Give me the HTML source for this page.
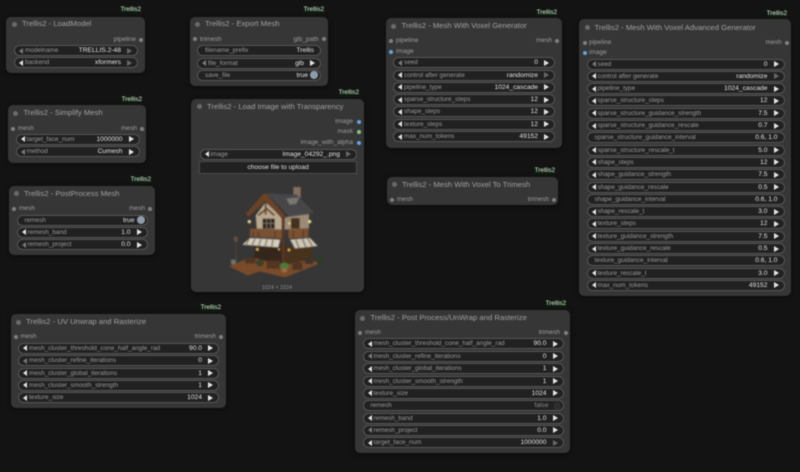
<!DOCTYPE html>
<html><head><meta charset="utf-8"><style>
html,body{margin:0;padding:0;width:800px;height:472px;overflow:hidden;background:#131313}
body{position:relative;font-family:"Liberation Sans",sans-serif}
#r{position:absolute;left:0;top:0;width:800px;height:472px;background:#131313;filter:blur(.4px);overflow:hidden}
.n{position:absolute;background:#363636;border-radius:5px;box-shadow:0 1px 5px rgba(0,0,0,.55)}
.t{position:absolute;font-size:7.7px;line-height:12px;height:12px;color:#a0a0a0;white-space:nowrap}
.d{position:absolute;width:5px;height:5px;border-radius:50%;background:#6a6a6a}
.b{position:absolute;font-size:6.4px;line-height:8px;height:8px;padding:0 1px;color:#dcf0dc;background:#0f1a10;white-space:nowrap;transform:translateX(-100%);border-radius:2px}
.p{position:absolute;font-size:6.5px;line-height:10px;height:10px;color:#9c9c9c;white-space:nowrap}
.pr{transform:translateX(-100%)}
.o{position:absolute;width:4px;height:4px;border-radius:50%;background:#808080}
.w{position:absolute;height:9px;background:#212121;border:1px solid #565656;border-radius:6px;font-size:6.4px;line-height:9.5px;color:#989898;white-space:nowrap}
.w b{font-weight:normal;position:absolute;left:10px;top:0}
.w b.s{left:7px}
.w u{text-decoration:none;position:absolute;right:16px;top:0;color:#e4e4e4;font-size:6.7px}
.w u.s{right:6px}
.w u.c{right:12px}
.w u.f{right:14px;color:#8a8a8a}
.w i{position:absolute;top:1.5px;width:0;height:0;border-top:3px solid transparent;border-bottom:3px solid transparent}
.w i.a{left:4px;border-right:4px solid #e4e4e4}
.w i.z{right:5px;border-left:5px solid #e4e4e4}
.w i.a.m{border-right-color:#7a7a7a}
.w i.z.m{border-left-color:#686868}
.w em{position:absolute;right:2px;top:.5px;width:8px;height:8px;border-radius:50%;background:#8f9caf}
.w em.x{background:#2e2e2e}
.c2{position:absolute;background:#212121;border:1px solid #4c4c4c;font-size:6.7px;line-height:11px;height:11px;color:#e0e0e0;text-align:center}
.v{position:absolute;font-size:5.4px;line-height:8px;color:#8a8a8a;text-align:center}
</style></head><body><div id="r">

<!-- LoadModel -->
<div class="b" style="left:142px;top:6px">Trellis2</div>
<div class="n" style="left:6px;top:17px;width:139px;height:56px"></div>
<div class="d" style="left:12px;top:21.5px"></div><div class="t" style="left:22px;top:18px">Trellis2 - LoadModel</div>
<div class="p pr" style="left:136px;top:34.5px">pipeline</div><div class="o" style="left:138.5px;top:37.5px"></div>
<div class="w" style="left:14px;top:45px;width:122px"><i class="a m"></i><b>modelname</b><u>TRELLIS.2-48</u><i class="z m"></i></div>
<div class="w" style="left:14px;top:57px;width:122px"><i class="a"></i><b>backend</b><u>xformers</u><i class="z m"></i></div>

<!-- Simplify -->
<div class="b" style="left:143px;top:95.5px">Trellis2</div>
<div class="n" style="left:8px;top:105px;width:138px;height:58px"></div>
<div class="d" style="left:13px;top:110.5px"></div><div class="t" style="left:23.5px;top:107px">Trellis2 - Simplify Mesh</div>
<div class="o" style="left:11px;top:126.5px"></div><div class="p" style="left:18px;top:123.5px">mesh</div>
<div class="p pr" style="left:137px;top:123.5px">mesh</div><div class="o" style="left:140px;top:126.5px"></div>
<div class="w" style="left:15.5px;top:133.5px;width:122px"><i class="a"></i><b>target_face_num</b><u>1000000</u><i class="z"></i></div>
<div class="w" style="left:15.5px;top:146px;width:122px"><i class="a m"></i><b>method</b><u>Cumesh</u><i class="z"></i></div>

<!-- PostProcess -->
<div class="b" style="left:152px;top:175.5px">Trellis2</div>
<div class="n" style="left:9px;top:186px;width:146px;height:69px"></div>
<div class="d" style="left:14px;top:191px"></div><div class="t" style="left:24px;top:187.5px">Trellis2 - PostProcess Mesh</div>
<div class="o" style="left:12px;top:206.5px"></div><div class="p" style="left:19px;top:203.5px">mesh</div>
<div class="p pr" style="left:145px;top:203.5px">mesh</div><div class="o" style="left:148px;top:206.5px"></div>
<div class="w" style="left:16.5px;top:214.5px;width:129px"><b class="s">remesh</b><u class="c">true</u><em></em></div>
<div class="w" style="left:16.5px;top:226.5px;width:129px"><i class="a"></i><b>remesh_band</b><u>1.0</u><i class="z"></i></div>
<div class="w" style="left:16.5px;top:239px;width:129px"><i class="a m"></i><b>remesh_project</b><u>0.0</u><i class="z"></i></div>

<!-- Export -->
<div class="b" style="left:325px;top:6px">Trellis2</div>
<div class="n" style="left:189.5px;top:17px;width:138.5px;height:69px"></div>
<div class="d" style="left:195px;top:22px"></div><div class="t" style="left:205px;top:18px">Trellis2 - Export Mesh</div>
<div class="o" style="left:193px;top:37px"></div><div class="p" style="left:200px;top:34.5px">trimesh</div>
<div class="p pr" style="left:318.5px;top:34.5px">glb_path</div><div class="o" style="left:321.5px;top:37px"></div>
<div class="w" style="left:197px;top:45px;width:122px"><b class="s">filename_prefix</b><u class="s">Trellis</u></div>
<div class="w" style="left:197px;top:57.5px;width:122px"><i class="a m"></i><b>file_format</b><u>glb</u><i class="z"></i></div>
<div class="w" style="left:197px;top:69.5px;width:122px"><b class="s">save_file</b><u class="c">true</u><em></em></div>

<!-- Load Image -->
<div class="b" style="left:360px;top:89px">Trellis2</div>
<div class="n" style="left:191px;top:99px;width:172.5px;height:193px"></div>
<div class="d" style="left:196.5px;top:104px"></div><div class="t" style="left:207px;top:100.5px">Trellis2 - Load Image with Transparency</div>
<div class="p pr" style="left:353px;top:117px">image</div><div class="o" style="left:356.5px;top:120px;background:#64a4dc"></div>
<div class="p pr" style="left:353px;top:127px">mask</div><div class="o" style="left:356.5px;top:130px;background:#82c784"></div>
<div class="p pr" style="left:353px;top:137.5px">image_with_alpha</div><div class="o" style="left:356.5px;top:140.5px;background:#64a4dc"></div>
<div class="w" style="left:199.5px;top:148.5px;width:155.5px"><i class="a"></i><b>image</b><u>Image_04292_.png</u><i class="z m"></i></div>
<div class="c2" style="left:199px;top:160.5px;width:156px">choose file to upload</div>
<svg style="position:absolute;left:225px;top:178px" width="105" height="105" viewBox="0 0 315 315">
<defs><filter id="bl" x="-5%" y="-5%" width="110%" height="110%"><feGaussianBlur stdDeviation="1.2"/></filter></defs>
<g filter="url(#bl)">
<polygon points="12,265 70,240 295,252 180,298 105,280 68,292" fill="#7a4b2a"/>
<rect x="205" y="27" width="22" height="32" fill="#86705c"/>
<polygon points="126,46 215,50 268,104 192,116 140,60" fill="#46474a"/>
<polygon points="184,62 222,58 214,78 194,80" fill="#7a7672"/>
<polygon points="92,112 122,72 178,126 178,155 95,152" fill="#b8a88e"/>
<polygon points="178,118 195,116 252,108 252,152 178,155" fill="#9a8a76"/>
<polygon points="62,108 116,46 128,50 184,118 174,126 122,68 72,116" fill="#6b4225"/>
<path d="M122,70L122,110M100,112L125,92L148,112" stroke="#5a3a22" stroke-width="5" fill="none"/>
<rect x="113" y="122" width="36" height="30" fill="#2f241c"/>
<path d="M125,122V152M137,122V152M113,136H149" stroke="#8f8270" stroke-width="2"/>
<rect x="198" y="120" width="26" height="32" fill="#43311f"/>
<polygon points="75,152 178,155 178,182 75,176" fill="#7a5130"/>
<polygon points="190,154 250,150 250,178 190,182" fill="#7a5130"/>
<path d="M85,160V176M100,160V178M150,160V180M205,158V180M235,156V178" stroke="#4e3320" stroke-width="3"/>
<polygon points="88,205 172,208 172,262 88,240" fill="#35261a"/>
<polygon points="172,205 262,205 262,240 172,264" fill="#47331f"/>
<rect x="170" y="118" width="9" height="150" fill="#563620"/>
<polygon points="52,200 75,180 166,185 160,208" fill="#d6cebc"/>
<polygon points="195,185 255,180 278,204 210,211" fill="#cfc7b6"/>
<path d="M72,182L62,203M90,182L80,205M108,183L100,206M126,184L120,207M144,185L140,208M212,184L222,210M232,182L243,208M248,181L262,205" stroke="#7b7062" stroke-width="4" fill="none"/>
<rect x="31" y="190" width="4" height="64" fill="#4a4038"/>
<rect x="27" y="176" width="11" height="15" fill="#5e5146"/>
<rect x="18" y="245" width="14" height="14" fill="#6c7470"/>
<circle cx="73" cy="131" r="5" fill="#eedb90"/>
<circle cx="193" cy="136" r="4" fill="#dec880"/>
<circle cx="254" cy="131" r="5" fill="#eedb90"/>
<circle cx="97" cy="214" r="4" fill="#d8b860"/>
<circle cx="192" cy="216" r="4" fill="#d8b860"/>
<circle cx="162" cy="214" r="3" fill="#d8b860"/>
<rect x="60" y="240" width="32" height="16" fill="#4e3524"/>
<rect x="125" y="248" width="40" height="24" fill="#523522"/>
<ellipse cx="105" cy="255" rx="12" ry="10" fill="#3e4129"/>
<ellipse cx="178" cy="264" rx="14" ry="10" fill="#4d7a38"/>
<rect x="170" y="272" width="16" height="11" fill="#9a6a44"/>
<ellipse cx="285" cy="248" rx="11" ry="11" fill="#2d3a26"/>
<rect x="202" y="252" width="30" height="24" fill="#4f3423"/>
<rect x="240" y="238" width="24" height="20" fill="#3f3329"/>
</g></svg>
<div class="v" style="left:191px;top:284px;width:172px">1024 × 1024</div>

<!-- Voxel Generator -->
<div class="b" style="left:558px;top:8.5px">Trellis2</div>
<div class="n" style="left:386px;top:18px;width:175.5px;height:130px"></div>
<div class="d" style="left:391px;top:23.5px"></div><div class="t" style="left:401.5px;top:20px">Trellis2 - Mesh With Voxel Generator</div>
<div class="o" style="left:389px;top:39px"></div><div class="p" style="left:396px;top:36px">pipeline</div>
<div class="p pr" style="left:552px;top:36px">mesh</div><div class="o" style="left:555px;top:39px"></div>
<div class="o" style="left:389px;top:49.5px;background:#64a4dc"></div><div class="p" style="left:396px;top:46.5px">image</div>
<div class="w" style="left:393px;top:57px;width:160px"><i class="a m"></i><b>seed</b><u>0</u><i class="z"></i></div>
<div class="w" style="left:393px;top:69.5px;width:160px"><i class="a"></i><b>control after generate</b><u>randomize</u><i class="z m"></i></div>
<div class="w" style="left:393px;top:81.5px;width:160px"><i class="a"></i><b>pipeline_type</b><u>1024_cascade</u><i class="z"></i></div>
<div class="w" style="left:393px;top:94px;width:160px"><i class="a"></i><b>sparse_structure_steps</b><u>12</u><i class="z"></i></div>
<div class="w" style="left:393px;top:106px;width:160px"><i class="a"></i><b>shape_steps</b><u>12</u><i class="z"></i></div>
<div class="w" style="left:393px;top:118.5px;width:160px"><i class="a"></i><b>texture_steps</b><u>12</u><i class="z"></i></div>
<div class="w" style="left:393px;top:131px;width:160px"><i class="a"></i><b>max_num_tokens</b><u>49152</u><i class="z"></i></div>

<!-- To Trimesh -->
<div class="b" style="left:556px;top:166.5px">Trellis2</div>
<div class="n" style="left:387px;top:177px;width:171px;height:28px"></div>
<div class="d" style="left:392px;top:182px"></div><div class="t" style="left:402px;top:178.5px">Trellis2 - Mesh With Voxel To Trimesh</div>
<div class="o" style="left:390px;top:197.5px"></div><div class="p" style="left:397px;top:194.5px">mesh</div>
<div class="p pr" style="left:549px;top:194.5px">trimesh</div><div class="o" style="left:552px;top:197.5px"></div>

<!-- Advanced -->
<div class="b" style="left:788px;top:9.5px">Trellis2</div>
<div class="n" style="left:579px;top:19px;width:212px;height:277px"></div>
<div class="d" style="left:584.5px;top:25px"></div><div class="t" style="left:594.5px;top:21.5px">Trellis2 - Mesh With Voxel Advanced Generator</div>
<div class="o" style="left:582.5px;top:41px"></div><div class="p" style="left:589px;top:38px">pipeline</div>
<div class="p pr" style="left:781.5px;top:38px">mesh</div><div class="o" style="left:784.5px;top:41px"></div>
<div class="o" style="left:582.5px;top:51px;background:#64a4dc"></div><div class="p" style="left:589px;top:48px">image</div>
<div class="w" style="left:586.5px;top:58.5px;width:196px"><i class="a m"></i><b>seed</b><u>0</u><i class="z"></i></div>
<div class="w" style="left:586.5px;top:70.8px;width:196px"><i class="a"></i><b>control after generate</b><u>randomize</u><i class="z m"></i></div>
<div class="w" style="left:586.5px;top:83.1px;width:196px"><i class="a"></i><b>pipeline_type</b><u>1024_cascade</u><i class="z"></i></div>
<div class="w" style="left:586.5px;top:95.4px;width:196px"><i class="a"></i><b>sparse_structure_steps</b><u>12</u><i class="z"></i></div>
<div class="w" style="left:586.5px;top:107.7px;width:196px"><i class="a"></i><b>sparse_structure_guidance_strength</b><u>7.5</u><i class="z"></i></div>
<div class="w" style="left:586.5px;top:120px;width:196px"><i class="a"></i><b>sparse_structure_guidance_rescale</b><u>0.7</u><i class="z"></i></div>
<div class="w" style="left:586.5px;top:132.3px;width:196px"><b class="s">sparse_structure_guidance_interval</b><u class="s">0.6, 1.0</u></div>
<div class="w" style="left:586.5px;top:144.6px;width:196px"><i class="a"></i><b>sparse_structure_rescale_t</b><u>5.0</u><i class="z"></i></div>
<div class="w" style="left:586.5px;top:156.9px;width:196px"><i class="a"></i><b>shape_steps</b><u>12</u><i class="z"></i></div>
<div class="w" style="left:586.5px;top:169.2px;width:196px"><i class="a"></i><b>shape_guidance_strength</b><u>7.5</u><i class="z"></i></div>
<div class="w" style="left:586.5px;top:181.5px;width:196px"><i class="a"></i><b>shape_guidance_rescale</b><u>0.5</u><i class="z"></i></div>
<div class="w" style="left:586.5px;top:193.8px;width:196px"><b class="s">shape_guidance_interval</b><u class="s">0.6, 1.0</u></div>
<div class="w" style="left:586.5px;top:206.1px;width:196px"><i class="a"></i><b>shape_rescale_t</b><u>3.0</u><i class="z"></i></div>
<div class="w" style="left:586.5px;top:218.4px;width:196px"><i class="a"></i><b>texture_steps</b><u>12</u><i class="z"></i></div>
<div class="w" style="left:586.5px;top:230.7px;width:196px"><i class="a"></i><b>texture_guidance_strength</b><u>7.5</u><i class="z"></i></div>
<div class="w" style="left:586.5px;top:243px;width:196px"><i class="a"></i><b>texture_guidance_rescale</b><u>0.5</u><i class="z"></i></div>
<div class="w" style="left:586.5px;top:255.3px;width:196px"><b class="s">texture_guidance_interval</b><u class="s">0.6, 1.0</u></div>
<div class="w" style="left:586.5px;top:267.6px;width:196px"><i class="a"></i><b>texture_rescale_t</b><u>3.0</u><i class="z"></i></div>
<div class="w" style="left:586.5px;top:279.9px;width:196px"><i class="a"></i><b>max_num_tokens</b><u>49152</u><i class="z"></i></div>

<!-- UV -->
<div class="b" style="left:222px;top:304px">Trellis2</div>
<div class="n" style="left:11px;top:314px;width:215px;height:94px"></div>
<div class="d" style="left:15.5px;top:319.5px"></div><div class="t" style="left:26px;top:316px">Trellis2 - UV Unwrap and Rasterize</div>
<div class="o" style="left:13.5px;top:335px"></div><div class="p" style="left:20.5px;top:332px">mesh</div>
<div class="p pr" style="left:216px;top:332px">trimesh</div><div class="o" style="left:219px;top:335px"></div>
<div class="w" style="left:18px;top:342.5px;width:199px"><i class="a"></i><b>mesh_cluster_threshold_cone_half_angle_rad</b><u>90.0</u><i class="z"></i></div>
<div class="w" style="left:18px;top:355px;width:199px"><i class="a m"></i><b>mesh_cluster_refine_iterations</b><u>0</u><i class="z"></i></div>
<div class="w" style="left:18px;top:367.5px;width:199px"><i class="a"></i><b>mesh_cluster_global_iterations</b><u>1</u><i class="z"></i></div>
<div class="w" style="left:18px;top:379.5px;width:199px"><i class="a"></i><b>mesh_cluster_smooth_strength</b><u>1</u><i class="z"></i></div>
<div class="w" style="left:18px;top:392px;width:199px"><i class="a"></i><b>texture_size</b><u>1024</u><i class="z"></i></div>

<!-- Post Process -->
<div class="b" style="left:567px;top:299.5px">Trellis2</div>
<div class="n" style="left:355px;top:310px;width:215px;height:143px"></div>
<div class="d" style="left:360px;top:315.5px"></div><div class="t" style="left:370.5px;top:312px">Trellis2 - Post Process/UnWrap and Rasterize</div>
<div class="o" style="left:358px;top:331px"></div><div class="p" style="left:365px;top:328px">mesh</div>
<div class="p pr" style="left:560px;top:328px">trimesh</div><div class="o" style="left:563.5px;top:331px"></div>
<div class="w" style="left:362.5px;top:338px;width:199px"><i class="a"></i><b>mesh_cluster_threshold_cone_half_angle_rad</b><u>90.0</u><i class="z"></i></div>
<div class="w" style="left:362.5px;top:350.5px;width:199px"><i class="a m"></i><b>mesh_cluster_refine_iterations</b><u>0</u><i class="z"></i></div>
<div class="w" style="left:362.5px;top:363px;width:199px"><i class="a"></i><b>mesh_cluster_global_iterations</b><u>1</u><i class="z"></i></div>
<div class="w" style="left:362.5px;top:375.5px;width:199px"><i class="a"></i><b>mesh_cluster_smooth_strength</b><u>1</u><i class="z"></i></div>
<div class="w" style="left:362.5px;top:387.5px;width:199px"><i class="a"></i><b>texture_size</b><u>1024</u><i class="z"></i></div>
<div class="w" style="left:362.5px;top:400px;width:199px"><b class="s">remesh</b><u class="f">false</u><em class="x"></em></div>
<div class="w" style="left:362.5px;top:412.5px;width:199px"><i class="a"></i><b>remesh_band</b><u>1.0</u><i class="z"></i></div>
<div class="w" style="left:362.5px;top:424.5px;width:199px"><i class="a m"></i><b>remesh_project</b><u>0.0</u><i class="z"></i></div>
<div class="w" style="left:362.5px;top:437px;width:199px"><i class="a"></i><b>target_face_num</b><u>1000000</u><i class="z m"></i></div>

</div></body></html>
